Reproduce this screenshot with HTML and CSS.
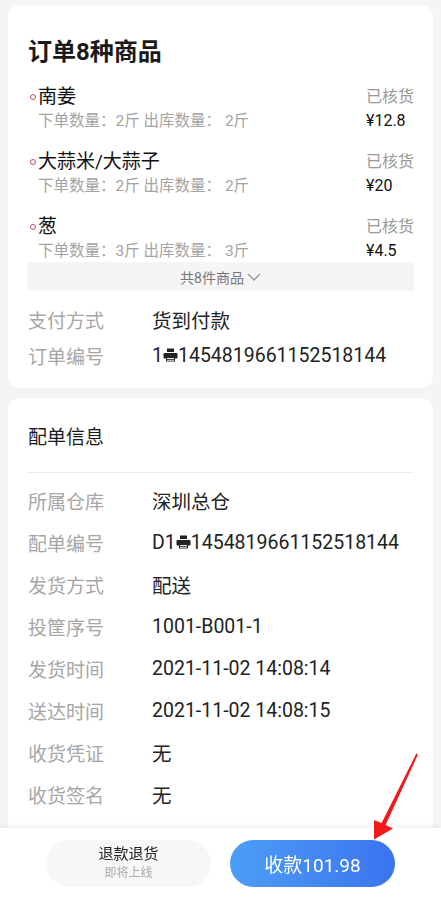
FILE: index.html
```html
<!DOCTYPE html>
<html lang="zh">
<head>
<meta charset="utf-8">
<link rel="stylesheet" href="styles.css">
</head>
<body>
<div class="page">
  <section class="card card-order">
    <h1 class="title">订单8种商品</h1>
    <div class="goods">
      <div class="good">
        <div class="good-name"><span class="dot"></span>南姜</div>
        <div class="good-status">已核货</div>
        <div class="good-qty">下单数量：2斤 出库数量： 2斤</div>
        <div class="good-price">¥12.8</div>
      </div>
      <div class="good">
        <div class="good-name"><span class="dot"></span>大蒜米/大蒜子</div>
        <div class="good-status">已核货</div>
        <div class="good-qty">下单数量：2斤 出库数量： 2斤</div>
        <div class="good-price">¥20</div>
      </div>
      <div class="good">
        <div class="good-name"><span class="dot"></span>葱</div>
        <div class="good-status">已核货</div>
        <div class="good-qty">下单数量：3斤 出库数量： 3斤</div>
        <div class="good-price">¥4.5</div>
      </div>
    </div>
    <div class="more">共8件商品<svg class="chev" width="14" height="8" viewBox="0 0 14 8"><path d="M1 1 L7 7 L13 1" fill="none" stroke="#999" stroke-width="1.4"/></svg></div>
    <div class="rows rows-pay">
      <div class="row"><span class="label">支付方式</span><span class="value">货到付款</span></div>
      <div class="row"><span class="label">订单编号</span><span class="value">1<svg class="printer" width="15" height="14" viewBox="0 0 15 14"><rect x="4" y="0.5" width="7" height="3.5" fill="#222"/><rect x="0.5" y="5" width="14" height="5.5" rx="1" fill="#222"/><rect x="3" y="9" width="9" height="4.5" fill="#222"/><rect x="4" y="10" width="7" height="0.9" fill="#fff"/><rect x="4" y="11.8" width="7" height="0.9" fill="#fff"/></svg>1454819661152518144</span></div>
    </div>
  </section>

  <section class="card card-dispatch">
    <h2 class="subtitle">配单信息</h2>
    <div class="divider"></div>
    <div class="rows rows-info">
      <div class="row"><span class="label">所属仓库</span><span class="value">深圳总仓</span></div>
      <div class="row"><span class="label">配单编号</span><span class="value">D1<svg class="printer" width="15" height="14" viewBox="0 0 15 14"><rect x="4" y="0.5" width="7" height="3.5" fill="#222"/><rect x="0.5" y="5" width="14" height="5.5" rx="1" fill="#222"/><rect x="3" y="9" width="9" height="4.5" fill="#222"/><rect x="4" y="10" width="7" height="0.9" fill="#fff"/><rect x="4" y="11.8" width="7" height="0.9" fill="#fff"/></svg>1454819661152518144</span></div>
      <div class="row"><span class="label">发货方式</span><span class="value">配送</span></div>
      <div class="row"><span class="label">投筐序号</span><span class="value">1001-B001-1</span></div>
      <div class="row"><span class="label">发货时间</span><span class="value">2021-11-02 14:08:14</span></div>
      <div class="row"><span class="label">送达时间</span><span class="value">2021-11-02 14:08:15</span></div>
      <div class="row"><span class="label">收货凭证</span><span class="value">无</span></div>
      <div class="row"><span class="label">收货签名</span><span class="value">无</span></div>
    </div>
  </section>
</div>

<footer class="bottom-bar">
  <button class="btn btn-refund"><span class="btn-main">退款退货</span><span class="btn-sub">即将上线</span></button>
  <button class="btn btn-pay">收款101.98</button>
</footer>

<svg class="arrow" width="441" height="899" viewBox="0 0 441 899"><polygon points="416.3,753.6 417.9,754.6 385.6,825 393,828.5 374,839.5 374,820 381.6,823" fill="#f2191b"/></svg>
</body>
</html>
```

FILE: styles.css
```css
* { box-sizing: border-box; }
html, body {
  margin: 0;
  padding: 0;
  background: #f4f5f7;
  font-family: Roboto, "Noto Sans CJK SC", sans-serif;
  color: #222;
}
.page {
  padding: 5px 8px 0;
  display: flex;
  flex-direction: column;
  gap: 10px;
}
.card {
  background: #fff;
  border-radius: 12px;
  padding: 0 19px 0 20px;
}
.card-order {
  padding-top: 32px;
  padding-bottom: 15px;
}
.title {
  margin: 0;
  font-size: 24px;
  line-height: 30px;
  font-weight: 700;
  color: #1a1a1a;
}
.goods {
  margin-top: 18px;
  height: 177px;
  overflow: hidden;
}
.good {
  display: grid;
  grid-template-columns: 1fr 48px;
  grid-auto-rows: 24px;
  margin-bottom: 17px;
}
.good-name {
  font-size: 19px;
  line-height: 24px;
  color: #111;
  display: flex;
  align-items: center;
}
.dot {
  width: 6px;
  height: 6px;
  border: 1px solid #c24d6b;
  border-radius: 50%;
  margin: 0 2px 0 2px;
  flex: none;
}
.good-status {
  font-size: 16px;
  line-height: 24px;
  color: #999;
  white-space: nowrap;
}
.good-qty {
  padding-left: 10px;
  font-size: 15.5px;
  line-height: 24px;
  color: #a3a3a3;
  white-space: nowrap;
}
.good-price {
  font-size: 16px;
  line-height: 24px;
  color: #111;
}
.more {
  height: 29px;
  margin-left: -1px;
  background: #f5f5f5;
  display: flex;
  align-items: center;
  justify-content: center;
  gap: 3px;
  font-size: 14px;
  color: #777;
}
.chev { display: block; }
.rows-pay { margin-top: 10px; }
.row {
  display: flex;
  align-items: center;
  font-size: 19px;
}
.rows-pay .row { height: 36px; }
.rows-info .row { height: 42px; }
.label {
  width: 124px;
  flex: none;
  color: #a6a6a6;
}
.value {
  color: #222;
  font-size: 19.5px;
  display: flex;
  align-items: center;
}
.printer { display: block; margin: 0 0 0 0; }
.card-dispatch {
  padding-top: 28px;
  padding-bottom: 40px;
}
.subtitle {
  margin: 0;
  font-size: 19px;
  line-height: 24px;
  font-weight: 400;
  color: #1a1a1a;
}
.divider {
  height: 1px;
  background: #ececec;
  margin: 22px 0 6px -1px;
}
.bottom-bar {
  position: fixed;
  left: 0;
  right: 0;
  bottom: 0;
  height: 71px;
  background: #fff;
  box-shadow: 0 -2px 6px rgba(0, 0, 0, 0.06);
  display: flex;
  justify-content: center;
  align-items: center;
  gap: 19px;
  padding-bottom: 1px;
}
.btn {
  width: 165px;
  height: 47px;
  border: none;
  border-radius: 24px;
  font-family: Roboto, "Noto Sans CJK SC", sans-serif;
  padding: 0;
  cursor: pointer;
}
.btn-refund {
  background: #f7f7f7;
  display: flex;
  flex-direction: column;
  align-items: center;
  justify-content: center;
}
.btn-main {
  font-size: 15px;
  line-height: 20px;
  color: #222;
}
.btn-sub {
  font-size: 12px;
  line-height: 18px;
  color: #aaa;
}
.btn-pay {
  background: linear-gradient(90deg, #4c9ef6 0%, #3b74ee 100%);
  color: #fff;
  font-size: 19px;
}
.arrow {
  position: absolute;
  left: 0;
  top: 0;
  pointer-events: none;
}
```
